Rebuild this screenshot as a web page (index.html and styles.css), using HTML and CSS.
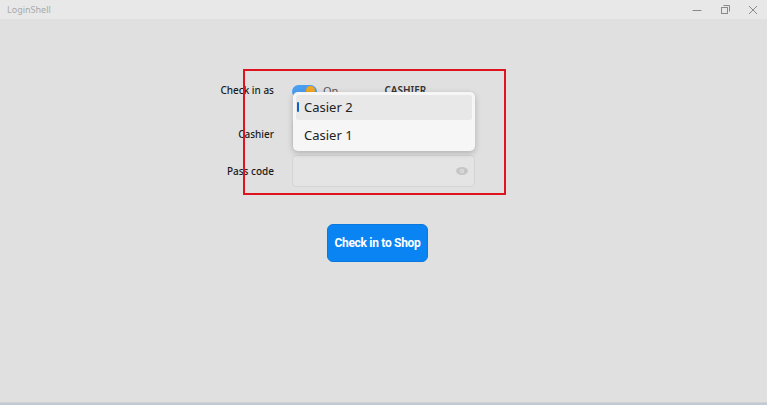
FILE: index.html
```html
<!DOCTYPE html>
<html lang="en">

<head>
    <meta charset="UTF-8">
    <meta name="viewport" content="width=device-width, initial-scale=1.0">
    <title>LoginShell</title>
    <link rel="stylesheet" href="styles.css">
</head>

<body>
    <div class="window">
        <header class="titlebar">
            <span class="app-title">LoginShell</span>
            <div class="caption-buttons">
                <span class="caption-btn">
                    <svg width="10" height="10" viewBox="0 0 10 10"><path d="M0.5 5.5h9" stroke="#8a8a8a" stroke-width="1"/></svg>
                </span>
                <span class="caption-btn">
                    <svg width="10" height="10" viewBox="0 0 10 10"><rect x="1.5" y="2.5" width="6" height="6" fill="none" stroke="#8a8a8a"/><path d="M3.5 0.5h6v6" fill="none" stroke="#8a8a8a"/></svg>
                </span>
                <span class="caption-btn">
                    <svg width="10" height="10" viewBox="0 0 10 10"><path d="M1 1l8 8M9 1l-8 8" stroke="#8a8a8a" stroke-width="1"/></svg>
                </span>
            </div>
        </header>

        <main class="content">
            <form class="login-form">
                <div class="row row-role">
                    <label class="field-label">Check in as</label>
                    <div class="control">
                        <span class="toggle"><span class="knob"></span></span>
                        <span class="toggle-text">On</span>
                        <span class="role-name">CASHIER</span>
                    </div>
                </div>
                <div class="row row-cashier">
                    <label class="field-label">Cashier</label>
                    <div class="control combo"></div>
                </div>
                <div class="row row-pass">
                    <label class="field-label">Pass code</label>
                    <div class="control passbox">
                        <svg class="eye" width="12" height="8" viewBox="0 0 12 8">
                            <ellipse cx="6" cy="4" rx="6" ry="4" fill="#c6c6c6"/>
                            <circle cx="6" cy="4" r="2" fill="#e4e4e4"/>
                            <circle cx="6" cy="4" r="1" fill="#c6c6c6"/>
                        </svg>
                    </div>
                </div>

                <!-- open dropdown of the cashier combo -->
                <ul class="dropdown">
                    <li class="item selected">Casier 2</li>
                    <li class="item">Casier 1</li>
                </ul>
                <div class="highlight"></div>
            </form>

            <button class="checkin-btn" type="button">Check in to Shop</button>
        </main>

        <div class="taskbar-edge"></div>
    </div>
</body>

</html>
```

FILE: styles.css
```css
* {
    box-sizing: border-box;
}
body {
    margin: 0;
    font-family: "Noto Sans", "Open Sans", sans-serif;
    background: #e0e0e0;
}
.window {
    width: 767px;
    height: 405px;
    display: flex;
    flex-direction: column;
    overflow: hidden;
}
.titlebar {
    height: 19px;
    background: #e8e8e8;
    display: flex;
    align-items: center;
    justify-content: space-between;
}
.app-title {
    font-size: 9px;
    color: #a8a8a8;
    padding-left: 7px;
}
.caption-buttons {
    display: flex;
}
.caption-btn {
    width: 28px;
    height: 19px;
    display: flex;
    align-items: center;
    justify-content: center;
}
.content {
    flex: 1;
    padding-left: 222px;
    padding-top: 61px;
}
.login-form {
    position: relative;
    width: 253px;
}
.row {
    display: grid;
    grid-template-columns: 52px 183px;
    column-gap: 18px;
    align-items: center;
}
.row-role {
    height: 20px;
}
.row-cashier {
    height: 30px;
    margin-top: 19px;
}
.row-pass {
    height: 32px;
    margin-top: 6px;
}
.field-label {
    font-size: 10px;
    font-weight: 500;
    color: #1a1a1a;
    white-space: nowrap;
    display: flex;
    justify-content: flex-end;
}
.control {
    display: flex;
    align-items: center;
    height: 100%;
}
.toggle {
    width: 25px;
    height: 13px;
    border-radius: 7px;
    background: #4a9ef0;
    position: relative;
    margin-top: 2px;
}
.knob {
    position: absolute;
    right: 2px;
    top: 1px;
    width: 9px;
    height: 9px;
    border-radius: 50%;
    background: #f5a623;
}
.toggle-text {
    font-size: 11px;
    color: #555;
    margin-left: 6px;
}
.role-name {
    font-size: 10px;
    font-weight: 600;
    color: #333;
    margin-left: 46px;
}
.combo {
    border: 1px solid #d6d6d6;
    border-radius: 4px;
    background: #ebebeb;
}
.passbox {
    position: relative;
    border: 1px solid #d4d4d4;
    border-radius: 4px;
    background: #e4e4e4;
    justify-content: flex-end;
    padding-right: 6px;
}
.eye {
    display: block;
}
.dropdown {
    position: absolute;
    left: 71px;
    top: 12px;
    width: 182px;
    height: 59px;
    margin: 0;
    padding: 3px;
    list-style: none;
    background: #f6f6f6;
    border-radius: 5px;
    box-shadow: 0 2px 6px rgba(0, 0, 0, 0.22);
}
.item {
    position: relative;
    height: 25px;
    line-height: 25px;
    padding-left: 8px;
    font-size: 13px;
    color: #222;
    border-radius: 3px;
}
.item + .item {
    margin-top: 3px;
}
.item.selected {
    background: #e8e8e8;
}
.item.selected::before {
    content: "";
    position: absolute;
    left: 1px;
    top: 7px;
    width: 2px;
    height: 10px;
    border-radius: 1px;
    background: #0a64c4;
}
.highlight {
    position: absolute;
    left: 21px;
    top: -11px;
    width: 263px;
    height: 126px;
    border: 2px solid #e0141e;
    pointer-events: none;
}
.checkin-btn {
    display: block;
    margin-top: 37px;
    margin-left: 105px;
    width: 101px;
    height: 38px;
    border: 1px solid #0a78dc;
    border-radius: 6px;
    background: #0a84f2;
    color: #fff;
    font-family: Roboto, "Noto Sans", sans-serif;
    font-size: 12px;
    font-weight: 700;
    letter-spacing: -0.3px;
    padding: 0;
}
.taskbar-edge {
    height: 3px;
    border-top: 1px solid #d2d2d2;
    background: #c3cad6;
}
```
